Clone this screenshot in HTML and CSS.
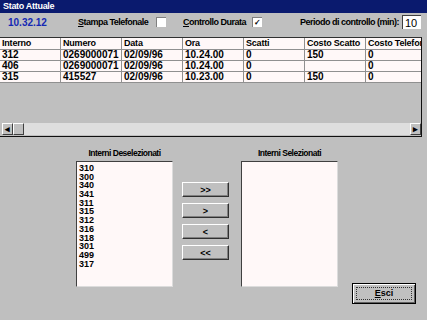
FILE: index.html
```html
<!DOCTYPE html>
<html lang="it">
<head>
  <meta charset="UTF-8" />
  <title>Stato Attuale</title>
  <link rel="stylesheet" href="styles.css">
</head>
<body>
  <div class="window">
    <div class="titlebar">Stato Attuale</div>

    <div class="toolbar">
      <span class="clock">10.32.12</span>
      <span class="opt stampa"><u>S</u>tampa Telefonale</span>
      <span class="check"></span>
      <span class="opt durata"><u>C</u>ontrollo Durata</span>
      <span class="check on">✓</span>
      <span class="opt period">Periodo di controllo (min):</span>
      <span class="field">10</span>
    </div>

    <div class="grid">
      <div class="grid-body">
        <table>
          <thead>
            <tr><th>Interno</th><th>Numero</th><th>Data</th><th>Ora</th><th>Scatti</th><th>Costo Scatto</th><th>Costo Telefonata</th></tr>
          </thead>
          <tbody>
            <tr><td>312</td><td>0269000071</td><td>02/09/96</td><td>10.24.00</td><td>0</td><td>150</td><td>0</td></tr>
            <tr><td>406</td><td>0269000071</td><td>02/09/96</td><td>10.24.00</td><td>0</td><td></td><td>0</td></tr>
            <tr><td>315</td><td>415527</td><td>02/09/96</td><td>10.23.00</td><td>0</td><td>150</td><td>0</td></tr>
          </tbody>
        </table>
      </div>
      <div class="hscroll">
        <span class="arrow">◂</span>
        <span class="thumb"></span>
        <span class="track"></span>
        <span class="arrow">▸</span>
      </div>
    </div>

    <div class="lower">
      <div class="listcol">
        <div class="listlabel">Interni Deselezionati</div>
        <ul class="listbox">
          <li>310</li><li>300</li><li>340</li><li>341</li><li>311</li><li>315</li>
          <li>312</li><li>316</li><li>318</li><li>301</li><li>499</li><li>317</li>
        </ul>
      </div>
      <div class="movers">
        <button class="btn">&gt;&gt;</button>
        <button class="btn">&gt;</button>
        <button class="btn">&lt;</button>
        <button class="btn">&lt;&lt;</button>
      </div>
      <div class="listcol">
        <div class="listlabel">Interni Selezionati</div>
        <ul class="listbox"></ul>
      </div>
      <button class="btn exit"><span class="focus"><u>E</u>sci</span></button>
    </div>
  </div>
</body>
</html>
```

FILE: styles.css
```css
html, body {
  margin: 0;
  padding: 0;
  width: 427px;
  height: 320px;
  overflow: hidden;
  background: #c0c0c0;
  font-family: "Liberation Sans", Arial, sans-serif;
  font-size: 9px;
  font-weight: bold;
  color: #000;
}

.window {
  display: flex;
  flex-direction: column;
  height: 320px;
  background: #bfbfbf;
}

.titlebar {
  height: 13px;
  line-height: 13px;
  padding-left: 3px;
  background: #0a1a6e;
  color: #fff;
  font-size: 9px;
  letter-spacing: -0.3px;
}

/* top row with options */
.toolbar {
  box-sizing: border-box;
  height: 24px;
  padding-bottom: 6px;
  display: flex;
  align-items: center;
  white-space: nowrap;
}

.clock {
  color: #1428b4;
  margin-left: 8px;
  width: 70px;
  font-size: 10px;
}

.opt u, .exit u {
  text-decoration: underline;
}

.opt {
  letter-spacing: -0.5px;
}

.stampa { width: 78px; }
.durata { margin-left: 17px; width: 69px; }
.period { margin-left: 38px; width: 102px; }

.check {
  width: 9px;
  height: 9px;
  background: #fff;
  border-top: 1px solid #808080;
  border-left: 1px solid #808080;
  font-size: 8px;
  line-height: 9px;
  text-align: center;
}

.field {
  width: 16px;
  height: 13px;
  line-height: 14px;
  padding-left: 2px;
  background: #fff;
  border-top: 1px solid #404040;
  border-left: 1px solid #404040;
  font-size: 11px;
  font-weight: normal;
}

/* data grid */
.grid {
  width: 421px;
  height: 98px;
  border-top: 1px solid #303030;
  border-right: 1px solid #101010;
  border-bottom: 1px solid #101010;
  display: flex;
  flex-direction: column;
}

.grid-body {
  flex: 1;
  overflow: hidden;
}

table {
  border-collapse: collapse;
  table-layout: fixed;
  width: 427px;
  background: #fff8f8;
}

th, td {
  width: 58px;
  padding: 0 0 0 2px;
  text-align: left;
  white-space: nowrap;
  overflow: hidden;
  border-right: 1px solid #909090;
  border-bottom: 1px solid #909090;
  font-weight: bold;
}

th {
  height: 11px;
  line-height: 11px;
  letter-spacing: -0.2px;
}

td {
  height: 10px;
  line-height: 10px;
  font-size: 10px;
}

.hscroll {
  height: 12px;
  display: flex;
  margin: 0 0 1px 2px;
}

.arrow, .thumb {
  width: 9px;
  height: 10px;
  background: #c0c0c0;
  border: 1px solid;
  border-color: #fff #404040 #404040 #fff;
  font-size: 9px;
  line-height: 10px;
  text-align: center;
}

.track {
  flex: 1;
  background: #dedede;
}

/* lower list section */
.lower {
  display: flex;
  padding: 10px 0 0 76px;
}

.listcol {
  display: flex;
  flex-direction: column;
  align-items: center;
  width: 97px;
}

.listcol + .listcol {
  width: 96px;
}

.listlabel {
  height: 14px;
  line-height: 12px;
  font-size: 8.5px;
  letter-spacing: -0.5px;
  white-space: nowrap;
}

.listbox {
  box-sizing: border-box;
  list-style: none;
  margin: 0;
  padding: 2px 0 0 2px;
  height: 126px;
  background: #fff8f8;
  border-top: 1px solid #404040;
  border-left: 1px solid #404040;
  border-right: 1px solid #dcdcdc;
  border-bottom: 1px solid #dcdcdc;
  align-self: stretch;
}

.listbox li {
  height: 8.7px;
  line-height: 9px;
  font-size: 9px;
}

.movers {
  display: flex;
  flex-direction: column;
  gap: 6px;
  margin: 35px 12px 0 9px;
}

.btn {
  width: 47px;
  height: 15px;
  padding: 0;
  background: #c0c0c0;
  border: 1px solid;
  border-color: #fff #303030 #303030 #fff;
  box-shadow: inset -1px -1px 0 #808080;
  font-family: inherit;
  font-size: 9px;
  font-weight: bold;
  color: #000;
}

.exit {
  width: 64px;
  height: 21px;
  margin: 136px 0 0 14px;
  border: 1px solid #000;
  box-shadow: inset 1px 1px 0 #fff, inset -1px -1px 0 #606060;
  font-size: 9px;
  display: flex;
  padding: 3px;
}

.focus {
  flex: 1;
  border: 1px dotted #333;
  line-height: 11px;
}
```
